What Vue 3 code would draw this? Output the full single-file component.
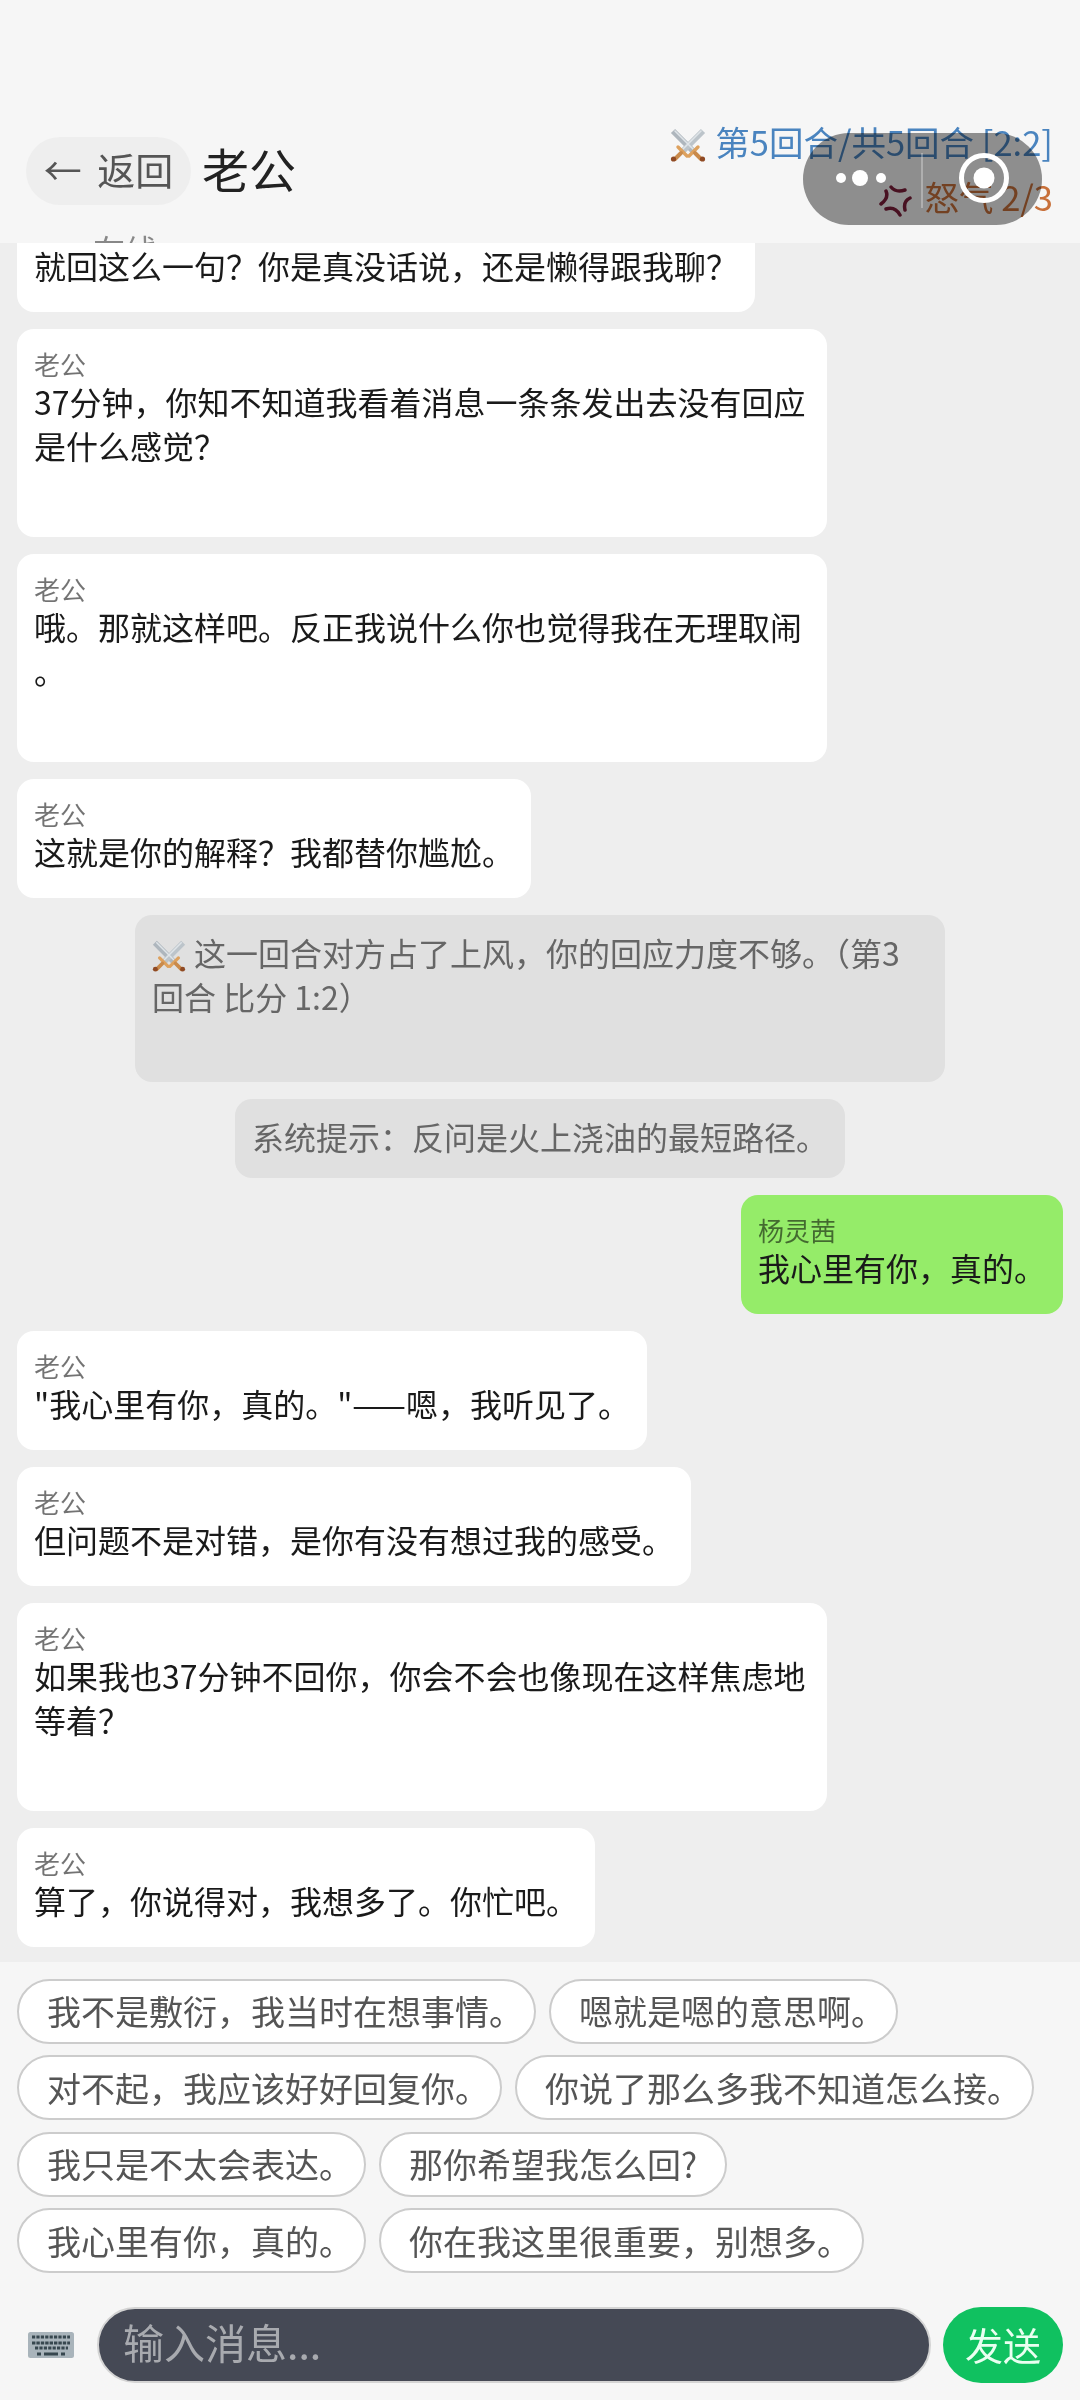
<script setup>
const messages = [
  { id: 1, kind: 'other', first: true, name: '老公', text: '就回这么一句\uFF1F你是真没话说\uFF0C还是懒得跟我聊\uFF1F' },
  { id: 2, kind: 'other', tall: true, name: '老公', text: '37分钟\uFF0C你知不知道我看着消息一条条发出去没有回应是什么感觉\uFF1F' },
  { id: 3, kind: 'other', tall: true, loose: true, name: '老公', text: '哦。那就这样吧。反正我说什么你也觉得我在无理取闹。' },
  { id: 4, kind: 'other', name: '老公', text: '这就是你的解释\uFF1F我都替你尴尬。' },
  { id: 5, kind: 'system', round: true, text: '这一回合对方占了上风\uFF0C你的回应力度不够。\uFF08第3回合 比分 1:2\uFF09' },
  { id: 6, kind: 'system', text: '系统提示\uFF1A反问是火上浇油的最短路径。' },
  { id: 7, kind: 'me', name: '杨灵茜', text: '我心里有你\uFF0C真的。' },
  { id: 8, kind: 'other', name: '老公', text: '"我心里有你\uFF0C真的。"——嗯\uFF0C我听见了。' },
  { id: 9, kind: 'other', name: '老公', text: '但问题不是对错\uFF0C是你有没有想过我的感受。' },
  { id: 10, kind: 'other', tall: true, name: '老公', text: '如果我也37分钟不回你\uFF0C你会不会也像现在这样焦虑地等着\uFF1F' },
  { id: 11, kind: 'other', name: '老公', text: '算了\uFF0C你说得对\uFF0C我想多了。你忙吧。' },
]

const replies = [
  '我不是敷衍\uFF0C我当时在想事情。',
  '嗯就是嗯的意思啊。',
  '对不起\uFF0C我应该好好回复你。',
  '你说了那么多我不知道怎么接。',
  '我只是不太会表达。',
  '那你希望我怎么回?',
  '我心里有你\uFF0C真的。',
  '你在我这里很重要\uFF0C别想多。',
]
</script>

<template>
  <div class="page">
    <svg class="defs" width="0" height="0">
      <symbol id="swords" viewBox="0 0 36 34">
        <g fill="none" stroke-linecap="round">
          <path d="M3 3 23 23" stroke="#aeb6bd" stroke-width="6" stroke-linecap="butt" />
          <path d="M33 3 13 23" stroke="#bcc4ca" stroke-width="6" stroke-linecap="butt" />
          <path d="M5 3 23 21M31 3 13 21" stroke="#dfe4e8" stroke-width="1.6" />
          <path d="M19 28 28 19M17 28 8 19" stroke="#dda15e" stroke-width="3.4" />
          <path d="M25 25 31 31M11 25 5 31" stroke="#c98a4b" stroke-width="4" />
          <circle cx="32.5" cy="31" r="2.6" fill="#8f4a24" />
          <circle cx="3.5" cy="31" r="2.6" fill="#8f4a24" />
        </g>
      </symbol>
    </svg>

    <header class="header">
      <button class="back">← 返回</button>
      <h1 class="title">老公</h1>
      <span class="status">在线</span>
      <div class="battle">
        <div class="round">
          <svg class="swords-top"><use href="#swords" /></svg>
          第5回合/共5回合 [2:2]
        </div>
        <div class="anger">
          <svg class="anger-icon" viewBox="10 10 33 33">
            <g fill="none" stroke="#7d1c38" stroke-width="3.500" stroke-linecap="round">
              <path d="M22 13Q27 19 36 16" />
              <path d="M17 17Q20 24 12 30" />
              <path d="M41 24Q34 27 36 36" />
              <path d="M17 35Q26 32 31 41" />
            </g>
          </svg>
          怒气 2/3
        </div>
      </div>
      <!-- 小程序胶囊,盖在内容上面 -->
      <div class="capsule"></div>
      <svg class="capsule-icons" width="239" height="92" viewBox="0 0 239 92">
        <circle cx="38" cy="45" r="5" fill="#fff" />
        <circle cx="57" cy="45" r="8" fill="#fff" />
        <circle cx="78" cy="45" r="5" fill="#fff" />
        <path d="M119 20V75" stroke="#fff" stroke-opacity=".4" stroke-width="1.5" />
        <circle cx="181" cy="45" r="22.500" fill="none" stroke="#fff" stroke-width="5" />
        <circle cx="181" cy="45" r="10.500" fill="#fff" />
      </svg>
    </header>

    <main class="list">
      <div
        v-for="m in messages"
        :key="m.id"
        class="bubble"
        :class="[m.kind, { first: m.first, tall: m.tall, loose: m.loose, 'sys-tall': m.round }]"
      >
        <div v-if="m.name" class="name">{{ m.name }}</div>
        <div class="text">
          <svg v-if="m.round" class="swords-inline"><use href="#swords" /></svg>{{ m.text }}
        </div>
      </div>
    </main>

    <footer class="bottom">
      <div class="replies">
        <button v-for="r in replies" :key="r" class="chip" :class="{ trim: r.endsWith('。') }">{{ r }}</button>
      </div>
      <div class="input-row">
        <svg class="keyboard" width="46" height="26" viewBox="0 0 46 26">
          <rect width="46" height="26" rx="2.500" fill="#a9b4bb" />
          <g fill="none" stroke="#37474f" stroke-width="2.800">
            <path d="M4 5H42" stroke-dasharray="3.200 1.200" />
            <path d="M4 11H42" stroke-dasharray="3.400 1" />
            <path d="M7 16H40" stroke-dasharray="3.200 1.200" />
            <path d="M9 22H13M16 22H30M33 22H37" />
          </g>
        </svg>
        <div class="input">输入消息...</div>
        <button class="send">发送</button>
      </div>
    </footer>
  </div>
</template>

<style scoped>
.page {
  display: flex;
  flex-direction: column;
  width: 1080px;
  height: 2400px;
  overflow: hidden;
  background: #f6f6f6;
  font-family: "Noto Sans CJK SC", "Noto Sans", sans-serif;
  color: #1a1a1a;
}

.defs {
  position: absolute;
}

.header {
  position: relative;
  flex: none;
  display: flex;
  align-items: center;
  box-sizing: border-box;
  height: 243px;
  padding: 99px 27px 0 26px;
  overflow: hidden;
}

.back {
  width: 165px;
  height: 68px;
  padding: 0 0 6px;
  border: none;
  border-radius: 34px;
  background: #eeeeee;
  color: #555;
  font: inherit;
  font-size: 38px;
  word-spacing: 7px;
  white-space: nowrap;
}

.title {
  margin: 0 0 8px 11px;
  font-size: 47px;
  font-weight: 400;
  color: #222;
}

.status {
  position: absolute;
  left: 93px;
  top: 229px;
  font-size: 32px;
  line-height: 40px;
  color: #888;
}

.battle {
  margin-left: auto;
  padding-bottom: 5px;
  text-align: right;
  font-size: 34.500px;
  line-height: 55px;
  white-space: nowrap;
}

.round {
  color: #4a84bf;
}

.anger {
  color: #c8703a;
}

.swords-top {
  width: 36px;
  height: 34px;
  margin-right: 2px;
  vertical-align: -6px;
}

.anger-icon {
  width: 33px;
  height: 33px;
  margin-right: 5px;
  vertical-align: -6px;
}

.capsule {
  position: absolute;
  left: 803px;
  top: 133px;
  width: 239px;
  height: 92px;
  border-radius: 46px;
  background: #939393;
  mix-blend-mode: multiply;
}

.capsule-icons {
  position: absolute;
  left: 803px;
  top: 133px;
}

.list {
  flex: 1;
  min-height: 0;
  display: flex;
  flex-direction: column;
  align-items: flex-start;
  gap: 17px;
  padding: 0 17px;
  overflow: hidden;
  background: #eeeeee;
}

.bubble {
  flex: none;
  box-sizing: border-box;
  max-width: 810px;
  padding: 17px 17px 25px;
  border-radius: 17px;
  background: #fff;
}

.bubble.first {
  margin-top: -50px;
}

.bubble.tall {
  padding-bottom: 70px;
}

.bubble.loose {
  line-break: anywhere;
}

.bubble.me {
  align-self: flex-end;
  background: #95ec69;
}

.bubble.system {
  align-self: center;
  padding: 15px 17px 20px;
  background: #e0e0e0;
  color: #666;
}

.bubble.sys-tall {
  padding-bottom: 64px;
}

.name {
  margin-bottom: -2px;
  font-size: 26px;
  line-height: 35px;
  color: rgba(0, 0, 0, 0.55);
}

.text {
  font-size: 32px;
  line-height: 44px;
}

.swords-inline {
  width: 34px;
  height: 32px;
  margin-right: 8px;
  vertical-align: -6px;
}

.bottom {
  flex: none;
  padding: 17px;
}

.replies {
  display: flex;
  flex-wrap: wrap;
  gap: 11.500px 13px;
}

.chip {
  box-sizing: border-box;
  height: 65px;
  padding: 0 28px;
  border: 2px solid #cccccc;
  border-radius: 33px;
  background: #fff;
  color: #555;
  font: inherit;
  font-size: 34px;
  line-height: 1;
  white-space: nowrap;
}

.chip.trim {
  padding-right: 11px;
}

.input-row {
  display: flex;
  align-items: center;
  margin-top: 34px;
}

.keyboard {
  flex: none;
  margin: 0 23px 0 11px;
}

.input {
  flex: 1;
  box-sizing: border-box;
  height: 76px;
  padding-left: 24px;
  border: 2px solid #d4d4d4;
  border-radius: 38px;
  background: #454955;
  color: #a8aaaf;
  font-size: 41px;
  line-height: 64px;
}

.send {
  flex: none;
  width: 120px;
  height: 76px;
  margin-left: 12px;
  padding: 0 0 3px;
  border: none;
  border-radius: 38px;
  background: #10c160;
  color: #e9fff0;
  font: inherit;
  font-size: 38px;
}
</style>

<style>
html,
body {
  margin: 0;
}
</style>
